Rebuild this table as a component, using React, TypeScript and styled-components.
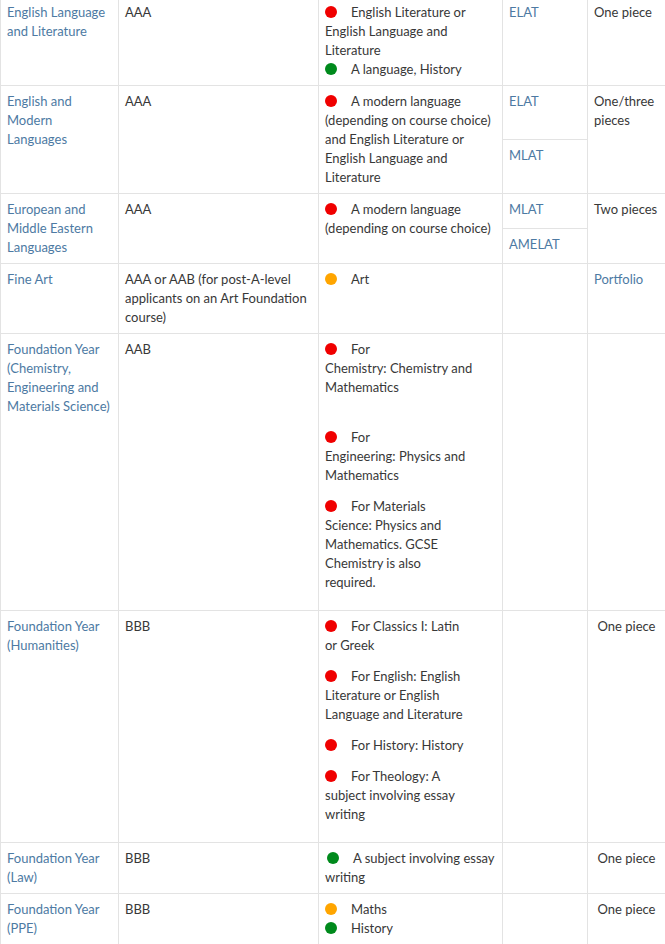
import React from 'react';
import styled, { createGlobalStyle } from 'styled-components';

type Tone = 'red' | 'green' | 'orange';

const toneColour: Record<Tone, string> = {
  red: '#f00000',
  green: '#008a1c',
  orange: '#ffa500',
};

const GlobalStyle = createGlobalStyle`
  body {
    margin: 0;
    background: #ffffff;
    font-family: 'Lato', 'Noto Sans', sans-serif;
    color: #383838;
  }
`;

const Table = styled.table`
  width: 665px;
  margin-top: -4px;
  border-collapse: collapse;
  table-layout: fixed;
  font-size: 13px;
  line-height: 19px;
`;

const Cell = styled.td<{ $center?: boolean }>`
  border: 1px solid #e3e3e3;
  padding: 6px 6px;
  vertical-align: top;
  text-align: ${({ $center }) => ($center ? 'center' : 'left')};
`;

const Link = styled.a`
  color: #4d7aa3;
  text-decoration: none;
`;

const Item = styled.div<{ $spaced?: boolean }>`
  margin-bottom: ${({ $spaced }) => ($spaced ? '12px' : '0')};
`;

const Dot = styled.span<{ $tone: Tone; $shift?: boolean }>`
  display: inline-block;
  width: 12px;
  height: 12px;
  border-radius: 50%;
  background: ${({ $tone }) => toneColour[$tone]};
  margin-left: ${({ $shift }) => ($shift ? '2px' : '0')};
  margin-right: 14px;
  vertical-align: -1px;
`;

const Blank = styled.div`
  height: 19px;
`;

const Lines = ({ lines }: { lines: string[] }) => (
  <>
    {lines.map((l, i) => (
      <React.Fragment key={i}>
        {i > 0 && <br />}
        {l}
      </React.Fragment>
    ))}
  </>
);

const Bullet = ({ tone, lines, spaced, shift }: { tone: Tone; lines: string[]; spaced?: boolean; shift?: boolean }) => (
  <Item $spaced={spaced}>
    <Dot $tone={tone} $shift={shift} />
    <Lines lines={lines} />
  </Item>
);

const Course = ({ lines, span }: { lines: string[]; span?: number }) => (
  <Cell rowSpan={span}>
    <Link href="#">
      <Lines lines={lines} />
    </Link>
  </Cell>
);

const App = () => (
  <>
    <GlobalStyle />
    <Table>
      <colgroup>
        <col style={{ width: 118 }} />
        <col style={{ width: 200 }} />
        <col style={{ width: 184 }} />
        <col style={{ width: 85 }} />
        <col style={{ width: 78 }} />
      </colgroup>
      <tbody>
        <tr>
          <Course lines={['English Language', 'and Literature']} />
          <Cell>AAA</Cell>
          <Cell>
            <Bullet tone="red" lines={['English Literature or', 'English Language and', 'Literature']} />
            <Bullet tone="green" lines={['A language, History']} />
          </Cell>
          <Cell><Link href="#">ELAT</Link></Cell>
          <Cell>One piece</Cell>
        </tr>

        <tr>
          <Course span={2} lines={['English and', 'Modern', 'Languages']} />
          <Cell rowSpan={2}>AAA</Cell>
          <Cell rowSpan={2}>
            <Bullet
              tone="red"
              lines={['A modern language', '(depending on course choice)', 'and English Literature or', 'English Language and', 'Literature']}
            />
          </Cell>
          <Cell><Link href="#">ELAT</Link></Cell>
          <Cell rowSpan={2}><Lines lines={['One/three', 'pieces']} /></Cell>
        </tr>
        <tr>
          <Cell><Link href="#">MLAT</Link></Cell>
        </tr>

        <tr>
          <Course span={2} lines={['European and', 'Middle Eastern', 'Languages']} />
          <Cell rowSpan={2}>AAA</Cell>
          <Cell rowSpan={2}>
            <Bullet tone="red" lines={['A modern language', '(depending on course choice)']} />
          </Cell>
          <Cell><Link href="#">MLAT</Link></Cell>
          <Cell rowSpan={2}>Two pieces</Cell>
        </tr>
        <tr>
          <Cell><Link href="#">AMELAT</Link></Cell>
        </tr>

        <tr>
          <Course lines={['Fine Art']} />
          <Cell><Lines lines={['AAA or AAB (for post-A-level', 'applicants on an Art Foundation', 'course)']} /></Cell>
          <Cell>
            <Bullet tone="orange" lines={['Art']} />
          </Cell>
          <Cell />
          <Cell><Link href="#">Portfolio</Link></Cell>
        </tr>

        <tr>
          <Course lines={['Foundation Year', '(Chemistry,', 'Engineering and', 'Materials Science)']} />
          <Cell>AAB</Cell>
          <Cell>
            <Bullet tone="red" spaced lines={['For', 'Chemistry: Chemistry and', 'Mathematics']} />
            <Blank />
            <Bullet tone="red" spaced lines={['For', 'Engineering: Physics and', 'Mathematics']} />
            <Bullet
              tone="red"
              spaced
              lines={['For Materials', 'Science: Physics and', 'Mathematics. GCSE', 'Chemistry is also', 'required.']}
            />
          </Cell>
          <Cell />
          <Cell />
        </tr>

        <tr>
          <Course lines={['Foundation Year', '(Humanities)']} />
          <Cell>BBB</Cell>
          <Cell>
            <Bullet tone="red" spaced lines={['For Classics I: Latin', 'or Greek']} />
            <Bullet tone="red" spaced lines={['For English: English', 'Literature or English', 'Language and Literature']} />
            <Bullet tone="red" spaced lines={['For History: History']} />
            <Bullet tone="red" spaced lines={['For Theology: A', 'subject involving essay', 'writing']} />
          </Cell>
          <Cell />
          <Cell $center>One piece</Cell>
        </tr>

        <tr>
          <Course lines={['Foundation Year', '(Law)']} />
          <Cell>BBB</Cell>
          <Cell>
            <Bullet tone="green" shift lines={['A subject involving essay', 'writing']} />
          </Cell>
          <Cell />
          <Cell $center>One piece</Cell>
        </tr>

        <tr>
          <Course lines={['Foundation Year', '(PPE)']} />
          <Cell>BBB</Cell>
          <Cell>
            <Bullet tone="orange" lines={['Maths']} />
            <Bullet tone="green" lines={['History']} />
          </Cell>
          <Cell />
          <Cell $center>One piece</Cell>
        </tr>
      </tbody>
    </Table>
  </>
);

export default App;
